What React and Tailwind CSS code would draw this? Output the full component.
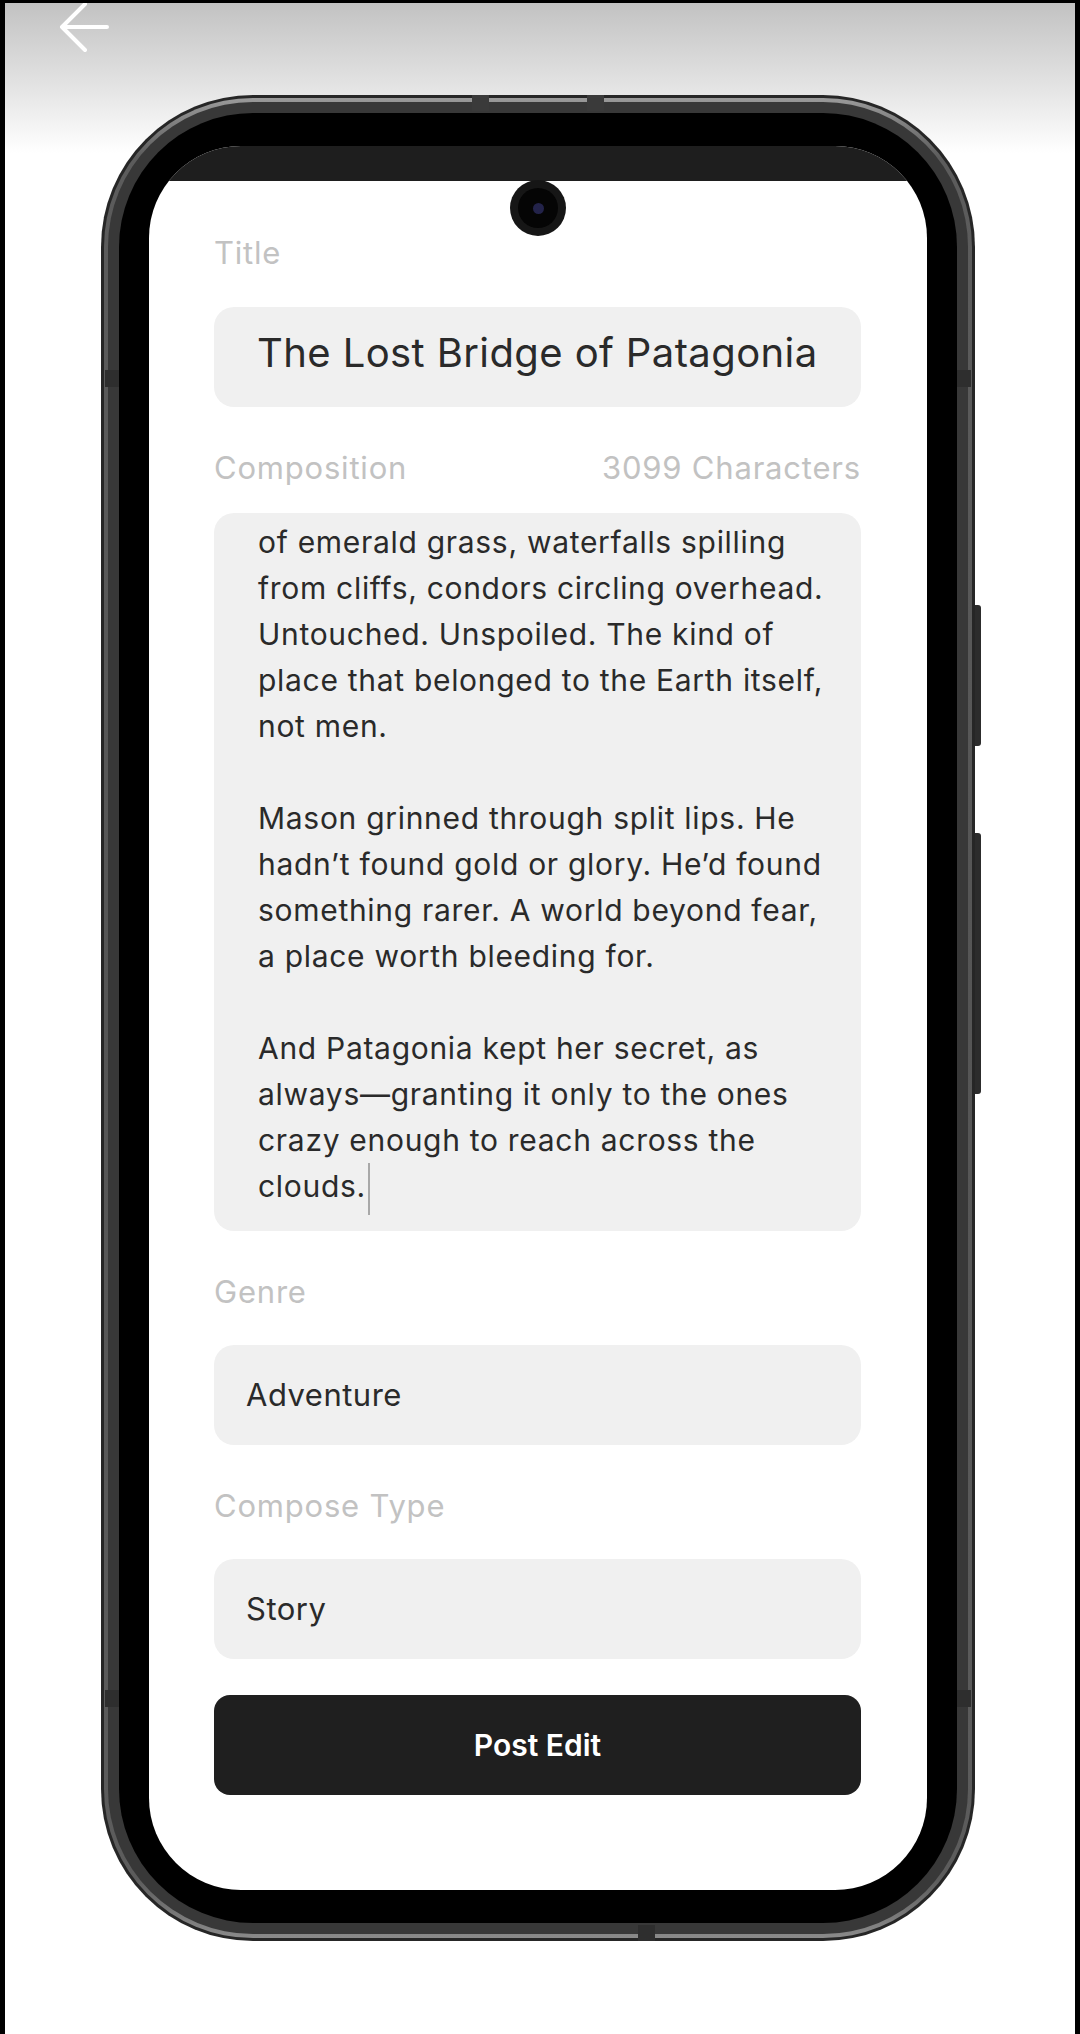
import React from "react";

const lines = [
  "of emerald grass, waterfalls spilling",
  "from cliffs, condors circling overhead.",
  "Untouched. Unspoiled. The kind of",
  "place that belonged to the Earth itself,",
  "not men.",
  "",
  "Mason grinned through split lips. He",
  "hadn\u2019t found gold or glory. He\u2019d found",
  "something rarer. A world beyond fear,",
  "a place worth bleeding for.",
  "",
  "And Patagonia kept her secret, as",
  "always\u2014granting it only to the ones",
  "crazy enough to reach across the",
];

function Label({ children, right }) {
  return (
    <div className="flex h-[40px] items-center justify-between text-[31px] tracking-[0.8px] text-[#c2c2c2]">
      <span>{children}</span>
      {right && <span>{right}</span>}
    </div>
  );
}

function Field({ label, children }) {
  return (
    <div className="flex flex-col gap-[33px]">
      <Label>{label}</Label>
      <div className="flex h-[100px] items-center rounded-[20px] bg-[#f0f0f0] pl-[32px] text-[31px] tracking-[0.5px]">
        {children}
      </div>
    </div>
  );
}

export default function App() {
  return (
    <div className="min-h-[2034px] w-[1080px] border-x-[5px] border-t-[3px] border-black bg-[linear-gradient(180deg,#c2c2c2_0px,#e6e6e6_90px,#ffffff_150px)] font-['Inter',sans-serif]">
      {/* top bar */}
      <div className="h-[92px] pl-[52px]">
        <svg width="60" height="52" viewBox="0 0 60 52" fill="none">
          <path
            d="M5 24 H50 M28 1 L5 24 L28 47"
            stroke="#ffffff"
            strokeWidth="4"
            strokeLinecap="round"
            strokeLinejoin="round"
          />
        </svg>
      </div>

      {/* phone */}
      <div className="relative ml-[96px] w-[874px]">
        {/* side buttons */}
        <div className="absolute right-[-6px] top-[510px] h-[141px] w-[7px] rounded-r-[3px] bg-[#2c2c2c]" />
        <div className="absolute right-[-6px] top-[738px] h-[261px] w-[7px] rounded-r-[3px] bg-[#2c2c2c]" />

        <div className="relative rounded-[152px] bg-[#262626] p-[3px]">
          {/* antenna bands */}
          <div className="absolute left-[371px] top-0 z-10 h-[16px] w-[17px] bg-[#3a3a3a]" />
          <div className="absolute left-[486px] top-0 z-10 h-[16px] w-[17px] bg-[#3a3a3a]" />
          <div className="absolute left-[4px] top-[275px] z-10 h-[17px] w-[14px] bg-[#2e2e2e]" />
          <div className="absolute left-[4px] top-[1595px] z-10 h-[17px] w-[14px] bg-[#2e2e2e]" />
          <div className="absolute right-[4px] top-[275px] z-10 h-[17px] w-[14px] bg-[#2e2e2e]" />
          <div className="absolute right-[4px] top-[1595px] z-10 h-[17px] w-[14px] bg-[#2e2e2e]" />
          <div className="absolute bottom-0 left-[537px] z-10 h-[16px] w-[17px] bg-[#2e2e2e]" />

          <div className="rounded-[149px] bg-[linear-gradient(180deg,#9a9a9a_0px,#5c5c5c_60px,#555555_50%,#5c5c5c_calc(100%-60px),#8a8a8a_100%)] p-[4px]">
            <div className="rounded-[145px] bg-[#383838] p-[11px]">
              <div className="rounded-[134px] bg-black px-[30px] pb-[33px] pt-[33px]">
                {/* screen */}
                <div className="relative h-[1744px] overflow-hidden rounded-[92px] bg-white">
                  <div className="h-[35px] bg-[#1e1e1e]" />

                  {/* camera */}
                  <div className="absolute left-1/2 top-[34px] flex h-[56px] w-[56px] -translate-x-1/2 items-center justify-center rounded-full bg-[#161616]">
                    <div className="flex h-[40px] w-[40px] items-center justify-center rounded-full bg-[#050505]">
                      <div className="h-[11px] w-[11px] rounded-full bg-[#23234a]" />
                    </div>
                  </div>

                  <div className="flex flex-col gap-[41px] pl-[65px] pr-[66px] pt-[52px] text-[#2a2a2a]">
                    <div className="flex flex-col gap-[34px]">
                      <Label>Title</Label>
                      <div className="flex h-[100px] items-center rounded-[20px] bg-[#f0f0f0] pb-[8px] pl-[43px] text-[40px] tracking-[0.4px] whitespace-nowrap">
                        The Lost Bridge of Patagonia
                      </div>
                    </div>

                    <div className="flex flex-col gap-[25px]">
                      <Label right="3099 Characters">Composition</Label>
                      <div className="h-[718px] overflow-hidden rounded-[20px] bg-[#f0f0f0] pl-[44px] pt-[6px] text-[30px] leading-[46px] tracking-[0.7px]">
                        {lines.map((l, i) => (
                          <div key={i} className="h-[46px] whitespace-nowrap">
                            {l}
                          </div>
                        ))}
                        <div className="h-[46px] whitespace-nowrap">
                          clouds.
                          <span className="-my-[4px] ml-[2px] inline-block h-[52px] w-[2px] bg-[#a8a8a8] align-middle" />
                        </div>
                      </div>
                    </div>

                    <Field label="Genre">Adventure</Field>
                    <Field label="Compose Type">Story</Field>

                    <button className="-mt-[5px] flex h-[100px] w-full items-center justify-center rounded-[16px] bg-[#1f1f1f] text-[30px] font-semibold text-white">
                      Post Edit
                    </button>
                  </div>
                </div>
              </div>
            </div>
          </div>
        </div>
      </div>
    </div>
  );
}
